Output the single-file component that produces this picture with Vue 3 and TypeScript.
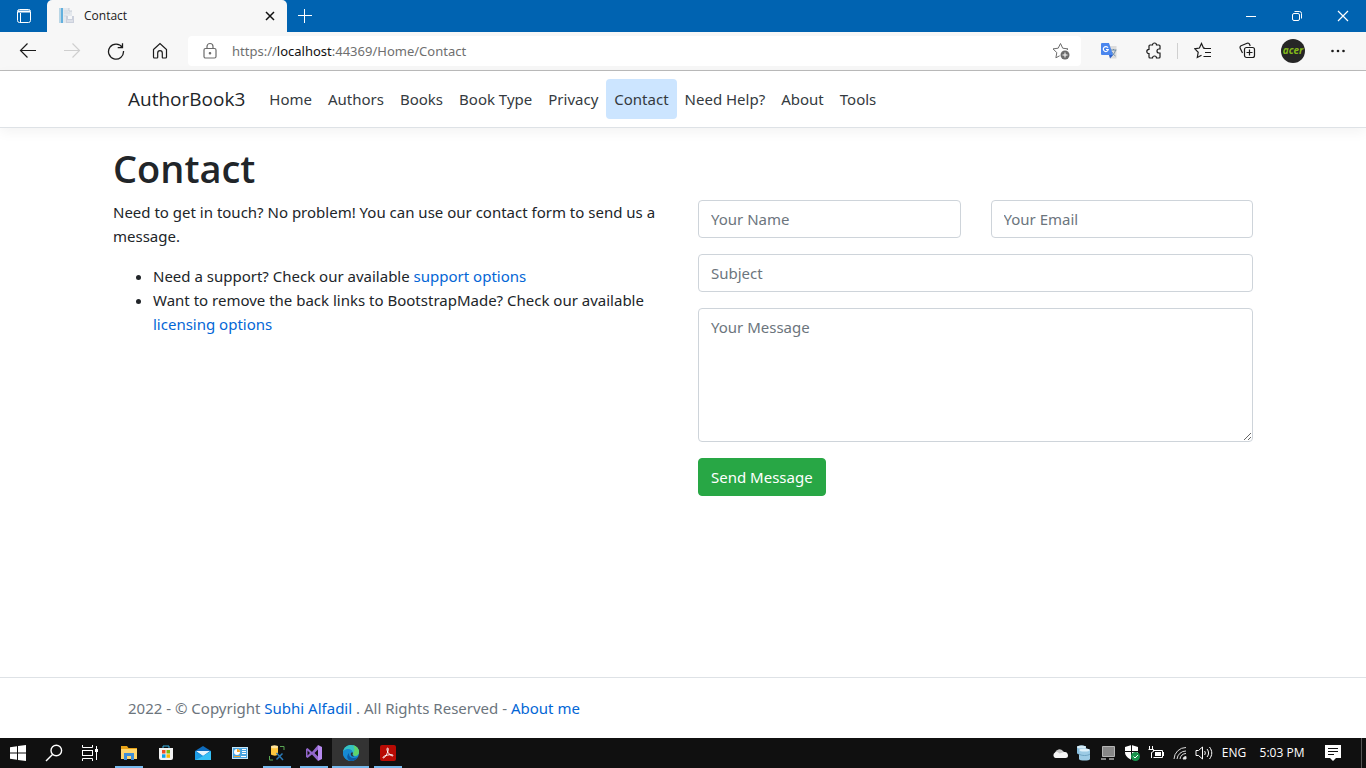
<script setup lang="ts">
import { ref } from 'vue'

interface NavLink {
  label: string
  active?: boolean
}

const links: NavLink[] = [
  { label: 'Home' },
  { label: 'Authors' },
  { label: 'Books' },
  { label: 'Book Type' },
  { label: 'Privacy' },
  { label: 'Contact', active: true },
  { label: 'Need Help?' },
  { label: 'About' },
  { label: 'Tools' },
]

const name = ref('')
const email = ref('')
const subject = ref('')
const message = ref('')
</script>

<template>
  <div class="screen">
    <header class="browser">
      <div class="titlebar">
        <button class="tab-menu" aria-label="Tab actions">
          <svg width="16" height="16" viewBox="0 0 16 16" fill="none" stroke="#fff">
            <rect x="1.500" y="1.500" width="13" height="13" rx="2" />
            <path d="M2 2.500h12v2H2z" fill="#fff" stroke="none" />
            <path d="M4.500 5v9" />
          </svg>
        </button>
        <div class="tab">
          <svg width="16" height="16" viewBox="0 0 16 16">
            <path d="M0 0h4v15H0z" fill="#62b0de" />
            <path d="M0 0h2v15H0z" fill="#b9d6e6" />
            <path d="M4 0h6l3 3v12H4z" fill="#e4e8ed" />
            <path d="M10 0v3h3" fill="#fff" stroke="#c5cbd5" />
            <path d="M5 3h4M5 5h6M5 8h3" stroke="#d5dae2" />
            <path d="M7 8h8v7H7z" fill="#cbd0dc" />
            <path d="M9 8h4v3H9z" fill="#f5f6f8" />
            <path d="M8 13h6" stroke="#eef0f4" />
          </svg>
          <span class="tab-title">Contact</span>
          <button class="tab-close" aria-label="Close tab">
            <svg width="10" height="10" viewBox="0 0 10 10" stroke="#111" stroke-width="1.500"><path d="M1 1l8 8M9 1L1 9" /></svg>
          </button>
        </div>
        <button class="new-tab" aria-label="New tab">
          <svg width="16" height="16" viewBox="0 0 16 16" stroke="#fff"><path d="M1 7.500h14M7.500 1v14" /></svg>
        </button>
        <div class="window-buttons">
          <button aria-label="Minimize"><svg width="12" height="12" viewBox="0 0 12 12" stroke="#fff"><path d="M1 6.500h10" /></svg></button>
          <button aria-label="Restore">
            <svg width="12" height="12" viewBox="0 0 12 12" fill="none" stroke="#fff">
              <rect x="1.500" y="3.500" width="7" height="7" rx="1.500" />
              <path d="M3.500 1.500h5a2 2 0 0 1 2 2v5" />
            </svg>
          </button>
          <button aria-label="Close"><svg width="12" height="12" viewBox="0 0 12 12" stroke="#fff" stroke-width="1.200"><path d="M1 1l10 10M11 1L1 11" /></svg></button>
        </div>
      </div>

      <div class="toolbar">
        <button class="tool" aria-label="Back">
          <svg width="18" height="18" viewBox="0 0 18 18" fill="none" stroke="#1b1b1b" stroke-width="1.200"><path d="M17 8.500H1.500M8.500 1.500l-7 7 7 7" /></svg>
        </button>
        <button class="tool" aria-label="Forward">
          <svg width="18" height="18" viewBox="0 0 18 18" fill="none" stroke="#cfcfcf" stroke-width="1.200"><path d="M1 8.500h15.500M9.500 1.500l7 7-7 7" /></svg>
        </button>
        <button class="tool" aria-label="Refresh">
          <svg width="18" height="18" viewBox="0 0 18 18" fill="none" stroke="#1b1b1b" stroke-width="1.300"><path d="M15.300 5.500A7.500 7.500 0 1 0 16.500 9M15.500 1.200v4.500h-4.800" /></svg>
        </button>
        <button class="tool" aria-label="Home">
          <svg width="18" height="18" viewBox="0 0 18 18" fill="none" stroke="#1b1b1b" stroke-width="1.200"><path d="M2.500 7.500L9 1.500l6.500 6v7.500a1 1 0 0 1-1 1h-2.500a.7.7 0 0 1-.7-.7V11a2.300 2.300 0 0 0-4.600 0v4.300a.7.7 0 0 1-.7.700H3.500a1 1 0 0 1-1-1z" /></svg>
        </button>
        <div class="address">
          <button class="address-icon" aria-label="Site information">
            <svg width="16" height="18" viewBox="0 0 16 18" fill="none" stroke="#6c6c6c" stroke-width="1.200">
              <rect x="2" y="6.500" width="12" height="9.500" rx="1.500" />
              <path d="M5 6.500V4.500a3 3 0 0 1 6 0v2" />
              <circle cx="8" cy="11.200" r=".7" fill="#555" />
            </svg>
          </button>
          <div class="url" role="textbox" aria-label="Address" contenteditable="true" spellcheck="false">https://<span class="host">localhost</span>:44369/Home/Contact</div>
          <button class="address-icon" aria-label="Add to favorites">
            <svg width="18" height="18" viewBox="0 0 18 18" fill="none" stroke="#6c6c6c">
              <path d="M8.500 1.500l2.200 4.700 5.300.7-3.900 3.700 1 5.200-4.600-2.500-4.600 2.500.9-5.200L1 6.900l5.200-.7z" />
              <circle cx="13" cy="13" r="5.500" fill="#fff" stroke="none" />
              <circle cx="13" cy="13" r="4.500" fill="#6c6c6c" stroke="none" />
              <path d="M10.500 13h5M13 10.500v5" stroke="#fff" />
            </svg>
          </button>
        </div>
        <button class="tool ext" aria-label="Translate">
          <svg width="16" height="16" viewBox="0 0 16 16">
            <path d="M5 3h10.500v12.500H9z" fill="#dcdcdc" />
            <path d="M10 7h5.500M12.500 6v1M14.500 7c-.5 3-2.500 5-4 6M11 9c1 2 2 3 3.500 4" stroke="#6f8ca4" fill="none" />
            <path d="M1 0h7l4 12H1a1 1 0 0 1-1-1V1a1 1 0 0 1 1-1z" fill="#4a86ee" />
            <path d="M8 12h4l-3 3.500z" fill="#2c5fc9" />
            <path d="M7 4.800A2.500 2.500 0 1 0 7.300 6.500H5" fill="none" stroke="#fff" stroke-width="1.200" />
          </svg>
        </button>
        <button class="tool ext" aria-label="Extensions">
          <svg width="18" height="18" viewBox="0 0 18 18" fill="none" stroke="#1b1b1b" stroke-width="1.200">
            <path d="M5 3h2.500a2 2 0 0 1 4 0H14a1 1 0 0 1 1 1v3h-1a2 2 0 0 0 0 4h1v4a1 1 0 0 1-1 1h-2.500a2 2 0 0 0-4 0H5a1 1 0 0 1-1-1v-3.300a2.200 2.200 0 0 1 0-4.400V4a1 1 0 0 1 1-1z" />
          </svg>
        </button>
        <span class="tool-divider"></span>
        <button class="tool ext" aria-label="Favorites">
          <svg width="18" height="18" viewBox="0 0 18 18" fill="none" stroke="#1b1b1b" stroke-width="1.200">
            <path d="M10.800 6.200H9.600L7.500 1.500 5.400 6 .8 6.800l3.400 3.500-.9 5.200 4.200-2.300M10 6.500h7M11 10.500h6M9.500 14.500H17" />
          </svg>
        </button>
        <button class="tool ext" aria-label="Collections">
          <svg width="18" height="18" viewBox="0 0 18 18" fill="none" stroke="#1b1b1b" stroke-width="1.200">
            <path d="M3.500 11L1.200 6.200a1.800 1.800 0 0 1 .9-2.400l6-2.500a1.800 1.800 0 0 1 2.400 1l.7 1.700" />
            <rect x="5.500" y="5.500" width="10" height="10" rx="2" />
            <path d="M10.500 7.500v6M7.500 10.500h6" />
          </svg>
        </button>
        <button class="tool ext" aria-label="Profile">
          <svg width="24" height="24" viewBox="0 0 24 24">
            <circle cx="12" cy="12" r="12" fill="#262626" />
            <text x="12" y="15" text-anchor="middle" class="avatar-text">acer</text>
          </svg>
        </button>
        <button class="tool ext" aria-label="Settings and more">
          <svg width="16" height="16" viewBox="0 0 16 16" fill="#1b1b1b"><circle cx="2.500" cy="8" r="1.300" /><circle cx="8" cy="8" r="1.300" /><circle cx="13.500" cy="8" r="1.300" /></svg>
        </button>
      </div>
    </header>

    <div class="page">
      <nav class="navbar">
        <div class="container padded nav-row">
          <a class="brand" href="#">AuthorBook3</a>
          <ul class="nav-list">
            <li v-for="link in links" :key="link.label">
              <a href="#" class="nav-link" :class="{ active: link.active }">{{ link.label }}</a>
            </li>
          </ul>
        </div>
      </nav>

      <main class="container">
        <h1>Contact</h1>
        <div class="columns">
          <section>
            <p>Need to get in touch? No problem! You can use our contact form to send us a message.</p>
            <ul class="options">
              <li>Need a support? Check our available <a href="#">support options</a></li>
              <li>Want to remove the back links to BootstrapMade? Check our available <a href="#">licensing options</a></li>
            </ul>
          </section>
          <form @submit.prevent>
            <div class="pair">
              <input v-model="name" type="text" placeholder="Your Name" aria-label="Your Name" />
              <input v-model="email" type="email" placeholder="Your Email" aria-label="Your Email" />
            </div>
            <input v-model="subject" type="text" placeholder="Subject" aria-label="Subject" />
            <textarea v-model="message" rows="5" placeholder="Your Message" aria-label="Your Message"></textarea>
            <button class="send" type="submit">Send Message</button>
          </form>
        </div>
      </main>

      <footer class="footer">
        <div class="container padded">
          2022 - © Copyright <a href="#">Subhi Alfadil</a> . All Rights Reserved - <a href="#">About me</a>
        </div>
      </footer>
    </div>

    <div class="taskbar">
      <div class="system">
        <button aria-label="Start">
          <svg width="16" height="16" viewBox="0 0 16 16" fill="#fff"><path d="M0 2.200l7-1v6.300H0zM8 1l8-1v7.500H8zM0 8.500h7v6.300l-7-1zM8 8.500h8V16l-8-1z" /></svg>
        </button>
        <button aria-label="Search">
          <svg width="18" height="18" viewBox="0 0 18 18" fill="none" stroke="#fff" stroke-width="1.400"><circle cx="11.300" cy="6.500" r="5.300" /><path d="M7.500 10.500L1 17" /></svg>
        </button>
        <button aria-label="Task view">
          <svg width="18" height="16" viewBox="0 0 18 16" fill="none" stroke="#fff">
            <path d="M1.500 0v2.500h10V0M1.500 16v-2.500h10V16M15.500 1v14" />
            <rect x="1.500" y="5.500" width="10" height="5" />
            <path d="M14 4h3v3h-3z" fill="#fff" stroke="none" />
          </svg>
        </button>
      </div>
      <div class="apps">
        <button class="open" aria-label="File Explorer">
          <svg width="16" height="16" viewBox="0 0 16 16">
            <path d="M0 1h6l1.500 2H16v11H0z" fill="#e8a317" />
            <path d="M0 4h16v10H0z" fill="#ffd76e" />
            <path d="M3 15V8h10v7h-3v-4H6v4z" fill="#3f8fd8" />
          </svg>
        </button>
        <button aria-label="Microsoft Store">
          <svg width="16" height="16" viewBox="0 0 16 16">
            <path d="M5 3V1h6v2" fill="none" stroke="#39b5e8" />
            <path d="M1 3h14v10a2 2 0 0 1-2 2H3a2 2 0 0 1-2-2z" fill="#f3f3f3" />
            <path d="M4 5h3.500v3.500H4z" fill="#f04e24" /><path d="M8.500 5H12v3.500H8.500z" fill="#7dba0a" />
            <path d="M4 9.300h3.500v3.500H4z" fill="#0aa2ea" /><path d="M8.500 9.300H12v3.500H8.500z" fill="#ffb900" />
          </svg>
        </button>
        <button aria-label="Mail">
          <svg width="16" height="16" viewBox="0 0 16 16">
            <path d="M0 6l8-5 8 5v9H0z" fill="#0f6cbd" />
            <path d="M1 6h14l-7 5z" fill="#e8f4fc" />
            <path d="M0 6l8 5-8 4z" fill="#1c9be5" /><path d="M16 6v9H0l8-4z" fill="#36c0f5" />
          </svg>
        </button>
        <button aria-label="Control panel">
          <svg width="16" height="16" viewBox="0 0 16 16">
            <path d="M0 2h16v12H0z" fill="#c5e5f8" /><path d="M1 3h14v10H1z" fill="#4aa5e2" />
            <circle cx="5" cy="7" r="3" fill="#fff" /><path d="M5 7V4a3 3 0 0 1 3 3z" fill="#f4a52c" />
            <path d="M10 4.500h4M10 6.500h4M10 8.500h4" stroke="#fff" /><path d="M2 11.500h6" stroke="#f4a52c" /><path d="M9 11.500h5" stroke="#fff" />
          </svg>
        </button>
        <button class="open" aria-label="Database tools">
          <svg width="16" height="16" viewBox="0 0 16 16" fill="none">
            <path d="M2 1.500v8c2 1.500 6 1.500 7 0v-8z" fill="#ffc63d" /><ellipse cx="5.500" cy="1.800" rx="3.500" ry="1.500" fill="#ffe39a" />
            <path d="M11 1.500h4V5M.5 11v4H4" stroke="#58a653" />
            <path d="M7.500 8l6.500 7M13.500 8.500l-6 6" stroke="#2a78b4" stroke-width="1.500" />
          </svg>
        </button>
        <button class="open" aria-label="Visual Studio">
          <svg width="16" height="16" viewBox="0 0 16 16">
            <path fill-rule="evenodd" d="M0 4l1.500-1L6 7l6-7v4.500L8.500 8l3.500 3.500V16L6 9.500 1.500 13 0 12zM1.500 5.500v5L4 8z" fill="#9267cb" />
            <path d="M12 0l4 2v12l-4 2z" fill="#b78af0" />
          </svg>
        </button>
        <button class="open current" aria-label="Microsoft Edge">
          <svg width="16" height="16" viewBox="0 0 16 16">
            <circle cx="8" cy="8" r="8" fill="#168bd3" />
            <path d="M0 7C1 2 4 0 8 0c5 0 8 3.500 8 7 0 2.500-2 4-4.500 4C9 11 9 9.500 10 8.500 10 6 8 4.500 5 4.500 3 4.500 1 5.500 0 7z" fill="#35c1c0" />
            <path d="M10 .3c4 .8 6 3.500 6 6.700 0 2.500-2 4-4.500 4L10 8.500C12 6 12 3 10 .3z" fill="#5fd36a" />
            <path d="M0 7c2-3.500 7-4 9.500-.5C6 6 4.500 9 6 12c1 2 3.500 3.500 6 2.800A8 8 0 0 1 0 7z" fill="#1689d2" />
            <path d="M6 8c-.5 4.500 4 6.500 9 4-1 2-4 4-7 4-4-1-5-5-2-8z" fill="#0b5aa4" />
            <path d="M8 8c1-1 1.500-1 2 0-1 1.500-.5 3 1.500 3.300-2 .7-4.500-1-3.500-3.300z" fill="#333" />
          </svg>
        </button>
        <button class="open" aria-label="Acrobat Reader">
          <svg width="16" height="16" viewBox="0 0 16 16">
            <rect width="16" height="16" rx="2" fill="#b80b04" />
            <path d="M3 12.500c0-2 10-4 10-2 0 1.500-4-1-5.300-3.500C6.500 4 7 3 7.600 3c1.400 0 .4 4.500-2 8-1 1.600-2.600 2.500-2.600 1.500z" fill="none" stroke="#fff" />
          </svg>
        </button>
      </div>
      <div class="tray">
        <button aria-label="OneDrive">
          <svg width="16" height="16" viewBox="0 0 16 16"><path d="M3 8a4.500 4.500 0 0 1 8-2l3 3-10 3z" fill="#c9c9c9" /><path d="M3.500 13A3 3 0 0 1 3 7.500c2-1 3.500 0 4.500 1L12 7c3-.5 4 2 4 3.500A2.500 2.500 0 0 1 13.500 13z" fill="#f6f6f6" /></svg>
        </button>
        <button aria-label="SQL Server">
          <svg width="16" height="16" viewBox="0 0 16 16">
            <path d="M1 2c0-2 9-2 9 0v6c0 2-9 2-9 0z" fill="#86bddd" /><ellipse cx="5.500" cy="2" rx="4.500" ry="1.500" fill="#d7edf8" />
            <path d="M3 5c0-2 11-2 11 0v9c0 2-11 2-11 0z" fill="#9ccbe5" /><ellipse cx="8.500" cy="5" rx="5" ry="1.500" fill="#dff1fa" />
            <path d="M3 9c2 2 9 2 11 0" fill="none" stroke="#6fa5c4" />
          </svg>
        </button>
        <button aria-label="Display">
          <svg width="16" height="16" viewBox="0 0 16 16"><path d="M2.500 1.500h12v10h-12z" fill="#888" stroke="#b5b5b5" /><path d="M1 13h5v2H1zM9 13h5v2H9z" fill="#858585" /></svg>
        </button>
        <button aria-label="Windows Security">
          <svg width="16" height="16" viewBox="0 0 16 16">
            <path d="M7.500 0L14 2v5c0 4-3 6-6.500 8C4 13 1 11 1 7V2z" fill="#fff" />
            <path d="M7.500 0v15M1 6.500h13" stroke="#101010" /><circle cx="11.500" cy="11.500" r="4.500" fill="#16934b" /><path d="M9.500 11.500l1.500 1.500 3-3" fill="none" stroke="#fff" />
          </svg>
        </button>
        <button aria-label="Battery">
          <svg width="16" height="16" viewBox="0 0 16 16" fill="none" stroke="#fff"><path d="M1.500 1v3M4.500 1v3M.5 4.500h5v2l-2 1v5.500M5.500 5.500h9v7h-9M15.500 7v4" /><path d="M7 7h6v4H7z" fill="#fff" stroke="none" /></svg>
        </button>
        <button aria-label="Wi-Fi">
          <svg width="16" height="16" viewBox="0 0 16 16" fill="none" stroke="#ddd"><path d="M2 14A12 12 0 0 1 14 2.500M5 14a9 9 0 0 1 9-8M8 14a6 6 0 0 1 6-5.500" /><path d="M11 14a3 3 0 0 1 3-2.500V14z" fill="#fff" /></svg>
        </button>
        <button aria-label="Volume">
          <svg width="18" height="16" viewBox="0 0 18 16" fill="none" stroke="#fff"><path d="M1 5.500h2.500L7.500 2v12l-4-3.500H1zM9.500 6c1 1 1 3 0 4M12 4c2 2.500 2 5.500 0 8M14.500 2c3 4 3 8 0 12" /></svg>
        </button>
        <button class="language">ENG</button>
        <button class="clock">5:03 PM</button>
        <button class="notify" aria-label="Notifications">
          <svg width="16" height="16" viewBox="0 0 16 16"><path d="M0 0h16v13h-5l-3 3-3-3H0z" fill="#fff" /><path d="M3 3.500h10M3 6.500h10M3 9.500h6" stroke="#101010" /></svg>
        </button>
        <button class="show-desktop" aria-label="Show desktop"></button>
      </div>
    </div>
  </div>
</template>

<style>
body {
  margin: 0;
}
</style>

<style scoped>
.screen,
.screen * {
  box-sizing: border-box;
}
.screen {
  display: flex;
  flex-direction: column;
  min-height: 100vh;
  font-family: 'Open Sans', 'Noto Sans', sans-serif;
  font-size: 15px;
  line-height: 24px;
  color: #212529;
  background: #fff;
}
button {
  font: inherit;
  color: inherit;
  border: 0;
  padding: 0;
  background: none;
}
svg {
  display: block;
  flex: none;
}
a {
  color: #0366d6;
  text-decoration: none;
}

/* Browser frame */
.browser {
  background: #f7f7f7;
  border-bottom: 1px solid #bbb;
}
.titlebar {
  display: flex;
  height: 32px;
  background: #0063b1;
}
.titlebar button {
  display: flex;
  align-items: center;
  justify-content: center;
}
.tab-menu {
  width: 47px;
}
.tab {
  display: flex;
  align-items: center;
  width: 240px;
  padding: 0 8px 0 12px;
  gap: 9px;
  background: #f7f7f7;
  border-radius: 5px 5px 0 0;
}
.tab-title {
  flex: 1;
  font-size: 12px;
  line-height: 16px;
  color: #1b1b1b;
}
.tab-close {
  width: 18px;
  height: 18px;
}
.new-tab {
  width: 35px;
}
.window-buttons {
  display: flex;
  margin-left: auto;
}
.window-buttons button {
  width: 46px;
}
.toolbar {
  display: flex;
  align-items: center;
  height: 38px;
  padding: 0 6px;
}
.tool {
  display: flex;
  align-items: center;
  justify-content: center;
  width: 44px;
  height: 32px;
}
.tool.ext {
  width: 45px;
}
.tool-divider {
  width: 1px;
  height: 16px;
  margin: 0 2px 0 1px;
  background: #d0d0d0;
}
.address {
  display: flex;
  flex: 1;
  align-items: center;
  height: 30px;
  margin: 0 5px 0 6px;
  background: #fff;
  border-radius: 4px;
}
.address-icon {
  display: flex;
  align-items: center;
  justify-content: center;
  width: 44px;
  height: 30px;
}
.address-icon:last-child {
  width: 40px;
}
.url {
  flex: 1;
  font-family: 'Noto Sans', 'Open Sans', sans-serif;
  font-size: 13px;
  line-height: 20px;
  white-space: nowrap;
  color: #6f6f6f;
}
.host {
  color: #111;
}
.avatar-text {
  font: italic bold 10px 'Open Sans', sans-serif;
  fill: #83b81a;
}

/* Web page */
.page {
  display: flex;
  flex: 1;
  flex-direction: column;
  font-family: 'Noto Sans', 'Open Sans', sans-serif;
}
.container {
  width: 100%;
  max-width: 1140px;
  margin: 0 auto;
}
.padded {
  padding: 0 15px;
}
.navbar {
  padding: 8px 0;
  margin-bottom: 16px;
  border-bottom: 1px solid #dee2e6;
  box-shadow: 0 4px 12px rgba(0, 0, 0, 0.05);
}
.nav-row {
  display: flex;
  align-items: center;
}
.brand {
  margin-right: 16px;
  font-family: 'Open Sans', 'Noto Sans', sans-serif;
  font-size: 19px;
  line-height: 30px;
  color: #212529;
}
.nav-list {
  display: flex;
  margin: 0;
  padding: 0;
  list-style: none;
}
.nav-link {
  display: block;
  padding: 8px;
  color: #343a40;
  border-radius: 4px;
}
.nav-link.active {
  background: #cce5ff;
}
main {
  flex: 1;
}
h1 {
  margin: 0 0 8px;
  font-family: 'Open Sans', 'Noto Sans', sans-serif;
  font-size: 38px;
  font-weight: 600;
  line-height: 48px;
}
.columns {
  display: grid;
  grid-template-columns: 1fr 1fr;
  gap: 30px;
}
.columns p {
  margin: 0 0 16px;
}
.options {
  margin: 0;
  padding-left: 40px;
}
form {
  display: flex;
  flex-direction: column;
  align-items: flex-start;
  gap: 16px;
}
.pair {
  display: grid;
  grid-template-columns: 1fr 1fr;
  gap: 30px;
  width: 100%;
}
input,
textarea {
  display: block;
  width: 100%;
  min-width: 0;
  margin: 0;
  padding: 6px 12px;
  font: inherit;
  color: #495057;
  background: #fff;
  border: 1px solid #ced4da;
  border-radius: 4px;
}
input {
  height: 38px;
}
textarea {
  height: 134px;
  resize: vertical;
}
input::placeholder,
textarea::placeholder {
  color: #6c757d;
  opacity: 1;
}
.send {
  padding: 6px 12px;
  color: #fff;
  background: #28a745;
  border: 1px solid #28a745;
  border-radius: 4px;
}
.footer {
  line-height: 60px;
  color: #6c757d;
  border-top: 1px solid #dee2e6;
}

/* Taskbar */
.taskbar {
  display: flex;
  height: 30px;
  color: #fff;
  background: #101010;
}
.taskbar button {
  display: flex;
  align-items: center;
  justify-content: center;
}
.system,
.apps,
.tray {
  display: flex;
}
.system button {
  width: 36px;
}
.apps {
  margin-left: 2px;
}
.apps button {
  width: 37px;
  padding-top: 2px;
  border-bottom: 2px solid transparent;
}
.apps .open {
  background: linear-gradient(#76b9ed, #76b9ed) center bottom / 28px 2px no-repeat;
  background-origin: border-box;
  background-clip: border-box;
}
.apps .current {
  background-color: #333;
  background-size: 100% 2px;
}
.tray {
  margin-left: auto;
}
.tray button {
  width: 24px;
  font-size: 12px;
}
.tray .language {
  width: 36px;
}
.tray .clock {
  width: 60px;
}
.tray .notify {
  width: 42px;
}
.tray .show-desktop {
  width: 5px;
  margin-left: 7px;
  border-left: 1px solid #555;
}
</style>
